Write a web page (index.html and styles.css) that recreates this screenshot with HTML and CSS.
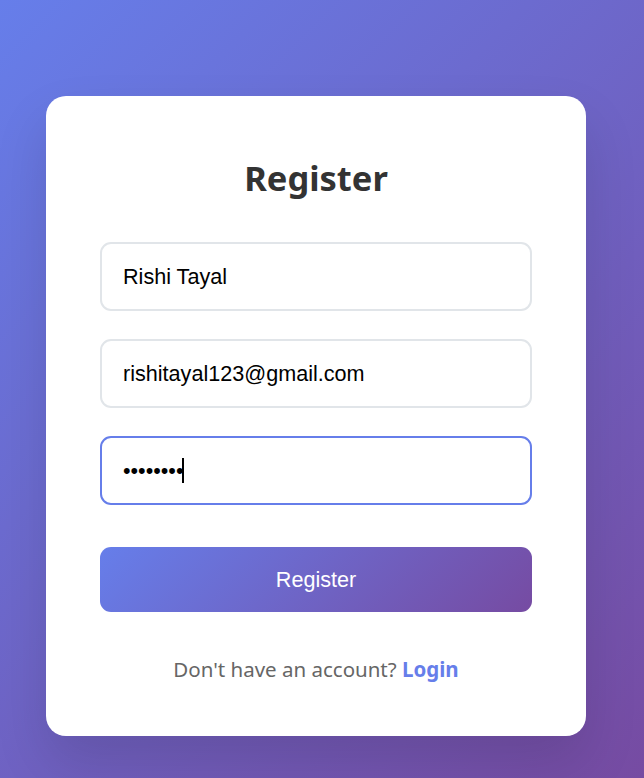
FILE: index.html
```html
<!DOCTYPE html>
<html lang="en">
<head>
<meta charset="utf-8">
<title>Register</title>
<link rel="stylesheet" href="styles.css">
</head>
<body>
<div class="page">
  <div class="card">
    <h2 class="title">Register</h2>
    <form class="form">
      <input class="field" type="text" value="Rishi Tayal">
      <input class="field" type="email" value="rishitayal123@gmail.com">
      <div class="field-wrap">
        <input class="field field-active" type="password" value="12345678">
        <span class="caret"></span>
      </div>
      <button class="btn" type="button">Register</button>
    </form>
    <p class="switch">Don't have an account? <a class="switch-link" href="#">Login</a></p>
  </div>
</div>
</body>
</html>
```

FILE: styles.css
```css
html, body {
  margin: 0;
  padding: 0;
}
body {
  width: 644px;
  height: 778px;
  overflow: hidden;
  background: linear-gradient(135deg, #667eea 0%, #764ba2 100%);
  font-family: "Noto Sans", "Open Sans", sans-serif;
}
.page {
  padding: 96px 0 0 46px;
}
.card {
  box-sizing: border-box;
  width: 540px;
  height: 640px;
  background: #ffffff;
  border-radius: 20px;
  padding: 54px;
  box-shadow: 0 27px 54px rgba(0, 0, 0, 0.12);
}
.title {
  margin: 2px 0 38px;
  text-align: center;
  font-size: 34.5px;
  line-height: 52px;
  font-weight: 700;
  color: #333333;
}
.form {
  display: flex;
  flex-direction: column;
}
.field {
  box-sizing: border-box;
  width: 100%;
  height: 69px;
  margin: 0 0 28px;
  padding: 0 21px;
  border: 2px solid #e1e5e9;
  border-radius: 11px;
  font-family: "Liberation Sans", Arial, sans-serif;
  font-size: 21.6px;
  color: #000000;
  background: #ffffff;
  outline: none;
}
.field-wrap {
  position: relative;
  margin-bottom: 42px;
}
.field-active {
  display: block;
  border-color: #667eea;
  margin-bottom: 0;
}
.caret {
  position: absolute;
  left: 82px;
  top: 22px;
  width: 2px;
  height: 25px;
  background: #000000;
}
.btn {
  height: 65px;
  border: none;
  border-radius: 11px;
  background: linear-gradient(135deg, #667eea 0%, #764ba2 100%);
  color: #ffffff;
  font-family: "Liberation Sans", Arial, sans-serif;
  font-size: 21.6px;
  cursor: pointer;
}
.switch {
  margin: 42px 0 0;
  text-align: center;
  font-size: 20.5px;
  line-height: 30px;
  color: #666666;
}
.switch-link {
  color: #667eea;
  font-weight: 700;
  text-decoration: none;
}
```
